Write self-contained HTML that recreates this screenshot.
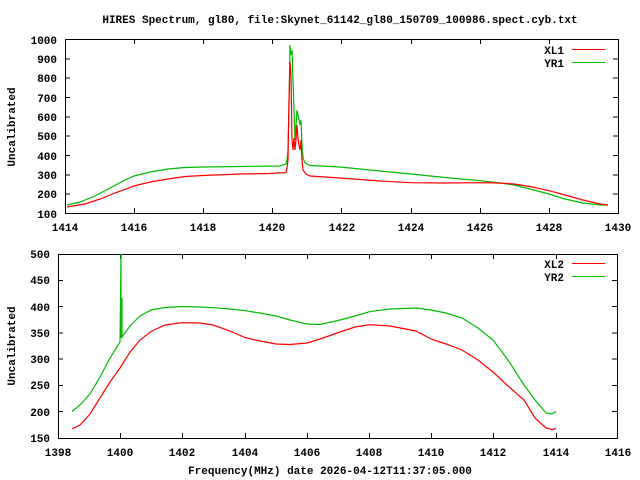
<!DOCTYPE html>
<html><head><meta charset="utf-8"><style>
html,body{margin:0;padding:0;background:#fff;}
svg{display:block}
text{font-family:"Liberation Mono","DejaVu Sans Mono",monospace;font-weight:bold;font-size:11px;fill:#000}
</style></head><body>
<svg width="640" height="480" viewBox="0 0 640 480" xmlns="http://www.w3.org/2000/svg">
<rect width="640" height="480" fill="#fff"/>
<text x="340" y="23" text-anchor="middle">HIRES Spectrum, gl80, file:Skynet_61142_gl80_150709_100986.spect.cyb.txt</text>

<!-- TOP PLOT -->
<g stroke="#000" stroke-width="1" fill="none" shape-rendering="crispEdges">
<rect x="65.5" y="39.5" width="553" height="174"/>
<path d="M65 58.8h5M65 78.2h5M65 97.5h5M65 116.8h5M65 136.2h5M65 155.5h5M65 174.8h5M65 194.2h5
M618 58.8h-5M618 78.2h-5M618 97.5h-5M618 116.8h-5M618 136.2h-5M618 155.5h-5M618 174.8h-5M618 194.2h-5
M134.5 213v-5M203.5 213v-5M272.5 213v-5M341.5 213v-5M411.5 213v-5M480.5 213v-5M549.5 213v-5
M134.5 39v5M203.5 39v5M272.5 39v5M341.5 39v5M411.5 39v5M480.5 39v5M549.5 39v5"/>
</g>
<g text-anchor="end">
<text x="57" y="44">1000</text><text x="57" y="63">900</text><text x="57" y="82">800</text>
<text x="57" y="102">700</text><text x="57" y="121">600</text><text x="57" y="140">500</text>
<text x="57" y="160">400</text><text x="57" y="179">300</text><text x="57" y="198">200</text>
<text x="57" y="218">100</text>
</g>
<g text-anchor="middle">
<text x="65" y="231">1414</text><text x="134" y="231">1416</text><text x="203" y="231">1418</text>
<text x="272" y="231">1420</text><text x="342" y="231">1422</text><text x="411" y="231">1424</text>
<text x="480" y="231">1426</text><text x="549" y="231">1428</text><text x="618" y="231">1430</text>
</g>
<text transform="translate(15,127) rotate(-90)" text-anchor="middle">Uncalibrated</text>
<text x="564" y="54" text-anchor="end">XL1</text>
<text x="564" y="67" text-anchor="end">YR1</text>
<g shape-rendering="crispEdges">
<path d="M572 49.5h33" stroke="#f00"/>
<path d="M572 62.5h33" stroke="#0b0"/>
</g>

<polyline fill="none" stroke="#0b0" stroke-width="1.2" points="67,205 80,202 95,196 110,188 125,180 134,176 150,172 168,169 185,167.5 203,167 240,166.5 280,166 286,164 287,160 288,150 289,105 290,45 291,55 292,50 293,80 294,110 295,140 296,125 297,110 298,115 299,120 300,125 301,120 302,145 303,158 305,163 310,165.5 340,167 380,171 411,174 445,177.5 480,180.7 500,183 514,185 530,189 549,194 565,199 583,203 600,205 608,205"/>
<polyline fill="none" stroke="#f00" stroke-width="1.2" points="67,207 85,204 100,199 115,193 134,186 150,182 168,179 185,176.5 203,175.5 240,174 270,173.5 286,172.5 287,168 288,160 289,100 290,62 291,75 292,140 293,150 294,138 295,150 296,140 297,125 298,138 299,145 300,150 301,140 302,160 303,170 306,174 310,176 340,178 380,181 411,182.7 445,183 480,182.7 500,183 514,184 530,186.5 549,190.7 565,195 583,200 600,204 608,205"/>

<!-- BOTTOM PLOT -->
<g stroke="#000" stroke-width="1" fill="none" shape-rendering="crispEdges">
<rect x="58.5" y="254.5" width="559" height="184"/>
<path d="M58 280.3h5M58 306.6h5M58 332.9h5M58 359.1h5M58 385.4h5M58 411.7h5
M617 280.3h-5M617 306.6h-5M617 332.9h-5M617 359.1h-5M617 385.4h-5M617 411.7h-5
M120.5 438v-5M182.5 438v-5M245.5 438v-5M307.5 438v-5M369.5 438v-5M431.5 438v-5M493.5 438v-5M556.5 438v-5
M120.5 254v5M182.5 254v5M245.5 254v5M307.5 254v5M369.5 254v5M431.5 254v5M493.5 254v5M556.5 254v5"/>
</g>
<g text-anchor="end">
<text x="50" y="258">500</text><text x="50" y="284">450</text><text x="50" y="311">400</text>
<text x="50" y="337">350</text><text x="50" y="363">300</text><text x="50" y="389">250</text>
<text x="50" y="416">200</text><text x="50" y="442">150</text>
</g>
<g text-anchor="middle">
<text x="58" y="456">1398</text><text x="120" y="456">1400</text><text x="182" y="456">1402</text>
<text x="245" y="456">1404</text><text x="307" y="456">1406</text><text x="369" y="456">1408</text>
<text x="431" y="456">1410</text><text x="493" y="456">1412</text><text x="556" y="456">1414</text>
<text x="618" y="456">1416</text>
</g>
<text transform="translate(15,346) rotate(-90)" text-anchor="middle">Uncalibrated</text>
<text x="330" y="474" text-anchor="middle">Frequency(MHz) date 2026-04-12T11:37:05.000</text>
<text x="564" y="268" text-anchor="end">XL2</text>
<text x="564" y="281" text-anchor="end">YR2</text>
<g shape-rendering="crispEdges">
<path d="M572 263.5h33" stroke="#f00"/>
<path d="M572 276.5h33" stroke="#0b0"/>
</g>

<polyline fill="none" stroke="#0b0" stroke-width="1.2" points="72,411.5 80,405 90,394 100,377 110,358 120,342 121,254 121,338 122,298 122,337 130,326 140,316 151,310 165,307.5 182,306.5 200,307 213,307.7 230,309 245,310.7 260,313 276,316 290,320 307,324 320,324.5 340,320 355,316 369.6,311.7 390,309 416,308 431,310 446,313 462,318 478,328 493,340 508,360 524,385 535,400 546,413 552,414 556,411.5"/>
<polyline fill="none" stroke="#f00" stroke-width="1.2" points="72,429 80,425 90,414 100,398 110,382 120,368 130,352 140,340 151,331.5 165,325 182,322.7 200,323 213,325 230,331 245,337.5 260,341 276,344 290,344.5 307,343 320,339 340,332 355,327 369.6,324.7 390,326 416,331 431,339 446,344 462,350 478,360 493,372 508,386 524,400 535,418 546,428 552,429.5 556,428.5"/>
</svg>
</body></html>
